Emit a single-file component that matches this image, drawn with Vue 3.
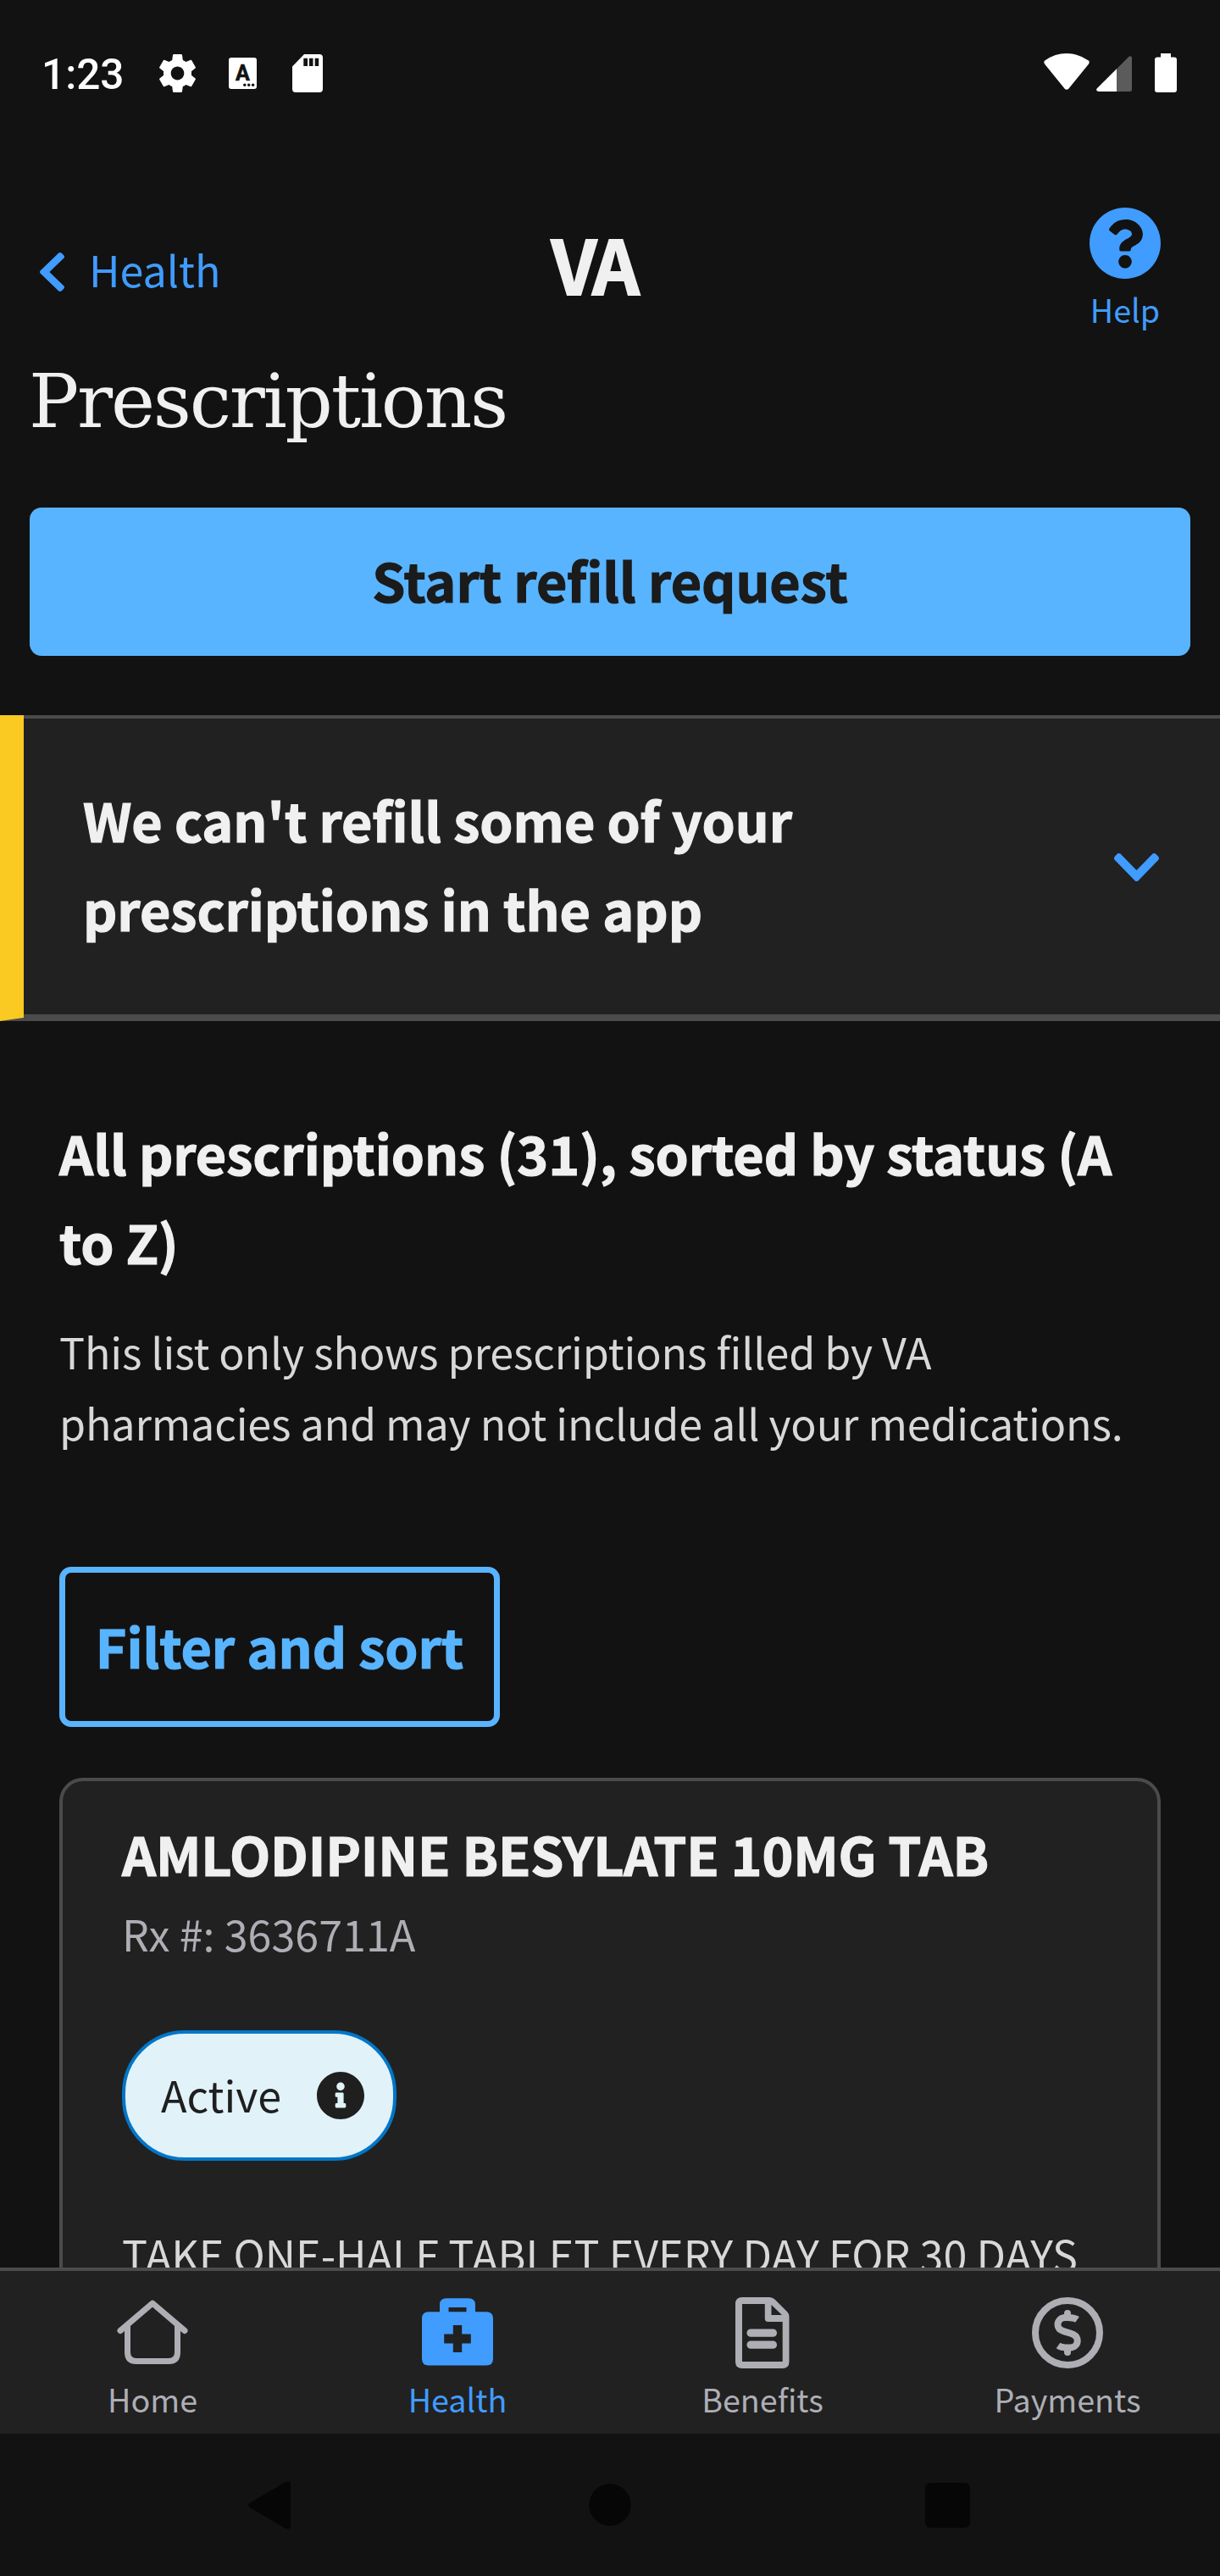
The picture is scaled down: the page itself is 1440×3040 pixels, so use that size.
<script setup>
const tabs = [
  { id: 'home', label: 'Home' },
  { id: 'health', label: 'Health', active: true },
  { id: 'benefits', label: 'Benefits' },
  { id: 'payments', label: 'Payments' },
]
const chevron =
  'M34.52 239.03L228.87 44.69c9.37-9.37 24.57-9.37 33.94 0l22.67 22.67c9.36 9.36 9.37 24.52.04 33.9L131.49 256l154.02 154.75c9.34 9.38 9.32 24.54-.04 33.9l-22.67 22.67c-9.37 9.37-24.57 9.37-33.94 0L34.52 272.97c-9.37-9.37-9.37-24.57 0-33.94z'
</script>

<template>
  <div class="phone">
    <div class="status">
      <span class="clock">1:23</span>
      <svg class="gear" width="43" height="45" viewBox="2.63 2.4 18.74 19.2" preserveAspectRatio="none" fill="#fff">
        <path d="M19.14,12.94c0.04-0.3,0.06-0.61,0.06-0.94c0-0.32-0.02-0.64-0.07-0.94l2.03-1.58c0.18-0.14,0.23-0.41,0.12-0.61 l-1.92-3.32c-0.12-0.22-0.37-0.29-0.59-0.22l-2.39,0.96c-0.5-0.38-1.03-0.7-1.62-0.94L14.4,2.81c-0.04-0.24-0.24-0.41-0.48-0.41 h-3.84c-0.24,0-0.43,0.17-0.47,0.41L9.25,5.35C8.66,5.59,8.12,5.92,7.63,6.29L5.24,5.33c-0.22-0.08-0.47,0-0.59,0.22L2.74,8.87 C2.62,9.08,2.66,9.34,2.86,9.48l2.03,1.58C4.84,11.36,4.8,11.69,4.8,12s0.02,0.64,0.07,0.94l-2.03,1.58 c-0.18,0.14-0.23,0.41-0.12,0.61l1.92,3.32c0.12,0.22,0.37,0.29,0.59,0.22l2.39-0.96c0.5,0.38,1.03,0.7,1.62,0.94l0.36,2.54 c0.05,0.24,0.24,0.41,0.48,0.41h3.84c0.24,0,0.44-0.17,0.47-0.41l0.36-2.54c0.59-0.24,1.13-0.56,1.62-0.94l2.39,0.96 c0.22,0.08,0.47,0,0.59-0.22l1.92-3.32c0.12-0.22,0.07-0.47-0.12-0.61L19.14,12.94z M12,15.4c-1.87,0-3.4-1.53-3.4-3.4 s1.53-3.4,3.4-3.4s3.4,1.53,3.4,3.4S13.87,15.4,12,15.4z" />
      </svg>
      <svg class="lang" width="33" height="37" viewBox="0 0 33 37">
        <rect width="33" height="37" rx="3" fill="#fff" />
        <text x="16.4" y="26.6" text-anchor="middle" font-family="Roboto, sans-serif" font-weight="700" font-size="25" fill="#121212" stroke="#121212" stroke-width=".6">A</text>
        <circle cx="18.8" cy="32.3" r="1.7" fill="#121212" />
        <circle cx="23.7" cy="32.3" r="1.7" fill="#121212" />
        <circle cx="28.6" cy="32.3" r="1.7" fill="#121212" />
      </svg>
      <svg class="sd" width="36" height="45" viewBox="0 0 36 45">
        <path fill="#fff" fill-rule="evenodd" d="M14 0H32Q36 0 36 4V41Q36 45 32 45H4Q0 45 0 41V14.5ZM13.3 4.7V14H18V4.7ZM20 4.7V14H24.5V4.7ZM26.7 4.7V14H31.2V4.7Z" />
      </svg>
      <div class="spacer"></div>
      <svg class="wifi" width="54" height="43" viewBox="0 0 54 43">
        <path fill="#fff" d="M1 12.5Q-.6 10 1.600 8.300Q13 0 27 0T52.400 8.300Q54.600 10 53 12.500L29.500 41.500Q27 44 24.500 41.500Z" />
      </svg>
      <svg class="signal" width="42" height="42" viewBox="0 0 42 42">
        <path fill="#5b5b5b" d="M24 15.300L38.500 .8Q41 -.8 42 2V39.500Q42 42 39.500 42H24Z" />
        <path fill="#fff" d="M24 15.300V42H2.500Q-1 41.400 .6 38.500Z" />
      </svg>
      <svg class="battery" width="26" height="46" viewBox="0 0 26 46">
        <path fill="#fff" d="M7 0H19V4.500H23Q26 4.500 26 7.500V43Q26 46 23 46H3Q0 46 0 43V7.500Q0 4.500 3 4.500H7Z" />
      </svg>
    </div>

    <main class="scroll">
      <header class="header">
        <div class="back">
          <svg width="29" height="46" viewBox="27.500 37.600 265 436.800" preserveAspectRatio="none" fill="#409cff"><path :d="chevron" /></svg>
          <span>Health</span>
        </div>
        <div class="logo">VA</div>
        <div class="help">
          <svg width="84" height="84" viewBox="8 8 496 496" fill="#409cff">
            <path d="M504 256c0 136.997-111.043 248-248 248S8 392.997 8 256C8 119.083 119.043 8 256 8s248 111.083 248 248zM262.655 90c-54.497 0-89.255 22.957-116.549 63.758-3.536 5.286-2.353 12.415 2.715 16.258l34.699 26.31c5.205 3.947 12.621 3.008 16.665-2.122 17.864-22.658 30.113-35.797 57.303-35.797 20.429 0 45.698 13.148 45.698 32.958 0 14.976-12.363 22.667-32.534 33.976C247.128 238.528 216 254.941 216 296v4c0 6.627 5.373 12 12 12h56c6.627 0 12-5.373 12-12v-1.333c0-28.462 83.186-29.647 83.186-106.667 0-58.002-60.165-102-116.531-102zM256 338c-25.365 0-46 20.635-46 46 0 25.364 20.635 46 46 46s46-20.636 46-46c0-25.365-20.635-46-46-46z" />
          </svg>
          <span>Help</span>
        </div>
      </header>

      <h1>Prescriptions</h1>
      <button class="primary">Start refill request</button>

      <section class="alert">
        <h2>We can't refill some of your<br />prescriptions in the app</h2>
        <svg width="53" height="33" viewBox="0 0 436.800 265" preserveAspectRatio="none" fill="#409cff">
          <path transform="translate(-37.600 292.500) rotate(-90)" :d="chevron" />
        </svg>
      </section>

      <section class="list">
        <h2>All prescriptions (31), sorted by status (A<br />to Z)</h2>
        <p class="note">This list only shows prescriptions filled by VA<br />pharmacies and may not include all your medications.</p>
        <button class="filter">Filter and sort</button>
        <article class="card">
          <h3>AMLODIPINE BESYLATE 10MG TAB</h3>
          <p class="rx">Rx #: 3636711A</p>
          <div class="pill">
            <span>Active</span>
            <svg width="56" height="56" viewBox="8 8 496 496" fill="#1f1f1f">
              <path d="M256 8C119.043 8 8 119.083 8 256c0 136.997 111.043 248 248 248s248-111.003 248-248C504 119.083 392.957 8 256 8zm0 110c23.196 0 42 18.804 42 42s-18.804 42-42 42-42-18.804-42-42 18.804-42 42-42zm56 254c0 6.627-5.373 12-12 12h-88c-6.627 0-12-5.373-12-12v-24c0-6.627 5.373-12 12-12h12v-64h-12c-6.627 0-12-5.373-12-12v-24c0-6.627 5.373-12 12-12h64c6.627 0 12 5.373 12 12v100h12c6.627 0 12 5.373 12 12v24z" />
            </svg>
          </div>
          <p class="directions">TAKE ONE-HALF TABLET EVERY DAY FOR 30 DAYS</p>
        </article>
      </section>
    </main>

    <nav class="tabs">
      <div v-for="t in tabs" :key="t.id" class="tab" :class="{ active: t.active }">
        <svg width="84" height="84" viewBox="0 0 84 84">
          <g v-if="t.id === 'home'" fill="none" stroke="currentColor" stroke-width="7" stroke-linecap="round" stroke-linejoin="round">
            <path d="M4 39.500L42 7.200L80 39.500" />
            <path stroke-linecap="butt" d="M12.500 34V65Q12.500 75.500 23 75.500H61Q71.500 75.500 71.500 65V34" />
          </g>
          <path v-else-if="t.id === 'health'" fill="currentColor" fill-rule="evenodd" d="M8 17.300H21V9Q21 1.300 29 1.300H55Q63 1.300 63 9V17.300H76Q84 17.300 84 25.300V72.500Q84 80.500 76 80.500H8Q0 80.500 0 72.500V25.300Q0 17.300 8 17.300ZM31.500 12V17.300H52.500V12ZM36.800 33V43.500H26.200V54.500H36.800V65H47.200V54.500H57.800V43.500H47.200V33Z" />
          <g v-else-if="t.id === 'benefits'" fill="currentColor">
            <path fill-rule="evenodd" d="M18 0H50Q54 0 57 3L71 17Q73.500 19.500 73.500 23V76Q73.500 84 65.500 84H18Q10 84 10 76V8Q10 0 18 0ZM18 8V76H65.700V29H48.500Q44.800 29 44.800 25.300V8ZM52.500 9V21H65Z" />
            <rect x="23.500" y="37.500" width="35.500" height="9.300" rx="4.650" />
            <rect x="23.500" y="51.500" width="35.500" height="9.300" rx="4.650" />
          </g>
          <g v-else fill="none" stroke="currentColor" stroke-width="8">
            <circle cx="42" cy="42" r="38" />
            <path d="M53.500 26.500Q50 24 42 24H39.500C34 24 30.500 28 30.500 32.500C30.500 37 33.500 39 38 40.300L46 42.800C50.500 44.200 53.700 47 53.700 51.500C53.700 56 50 59.500 45 59.500H42Q34.500 59.500 31 57" />
            <path stroke-linecap="round" d="M42 19V24M42 60V65" />
          </g>
        </svg>
        <span>{{ t.label }}</span>
      </div>
    </nav>

    <div class="sysnav">
      <svg width="50" height="57" viewBox="0 0 50 57"><path fill="#060606" d="M1.500 26L43.500 1.500Q50 -1.500 50 4V53Q50 58.500 43.500 55.500L1.500 31Q-1.500 28.500 1.500 26Z" /></svg>
      <svg width="50" height="50" viewBox="0 0 50 50"><circle cx="25" cy="25" r="24.700" fill="#060606" /></svg>
      <svg width="53" height="53" viewBox="0 0 53 53"><rect width="53" height="53" rx="6" fill="#060606" /></svg>
    </div>
  </div>
</template>

<style>
body {
  background: #121212;
}
</style>

<style scoped>
.phone {
  width: 1440px;
  height: 3040px;
  display: flex;
  flex-direction: column;
  overflow: hidden;
  background: #121212;
  color: #f0f0f0;
  font-family: 'Noto Sans CJK JP', 'Noto Sans', sans-serif;
  white-space: nowrap;
}
svg { display: block; flex: none; }
h1, h2, h3, p { margin: 0; }
button {
  display: block;
  font-family: inherit;
  white-space: nowrap;
}
.status {
  flex: none;
  height: 172px;
  display: flex;
  align-items: flex-start;
  padding: 0 51px 0 49px;
}
.clock {
  width: 99px;
  margin-top: 59px;
  font: 500 49.500px/59px Roboto, sans-serif;
  color: #fff;
}
.gear { margin: 64px 0 0 40px; }
.lang { margin: 68px 0 0 39px; }
.sd { margin: 64px 0 0 42px; }
.spacer { flex: 1; }
.wifi { margin: 63px 8px 0 0; }
.signal { margin: 66px 27px 0 0; }
.battery { margin-top: 63px; }

.scroll {
  flex: 1;
  min-height: 0;
  overflow: hidden;
}
.header {
  height: 240px;
  display: grid;
  grid-template-columns: 1fr auto 1fr;
  align-items: start;
}
.back {
  display: flex;
  align-items: center;
  gap: 29px;
  padding-left: 47px;
  margin-top: 103px;
  height: 84px;
  font-size: 50.200px;
  line-height: 84px;
  color: #409cff;
}
.back svg { margin-top: 8px; }
.logo {
  margin: 88px 34px 0 0;
  width: 105px;
  font-size: 87.300px;
  line-height: 100px;
  font-weight: 700;
  letter-spacing: -4px;
  -webkit-text-stroke: 1.800px currentColor;
}
.help {
  justify-self: end;
  margin: 73px 70px 0 0;
  width: 84px;
  display: flex;
  flex-direction: column;
  align-items: center;
  color: #409cff;
  font-size: 37.700px;
  line-height: 40px;
}
.help span { margin-top: 15.600px; }
h1 {
  margin: 12px 0 0 34px;
  font-family: 'DejaVu Serif', serif;
  font-weight: 400;
  font-size: 88px;
  line-height: 100px;
  letter-spacing: -2.200px;
}
.primary {
  width: 1370px;
  height: 175px;
  margin: 75px 35px 0;
  padding: 0 0 6px;
  border: 0;
  border-radius: 14px;
  background: #58b4ff;
  color: #1b1b1b;
  font-size: 62.700px;
  font-weight: 700;
  -webkit-text-stroke: 1.200px currentColor;
}
h2, h3 {
  font-size: 62.700px;
  line-height: 105px;
  font-weight: 700;
  -webkit-text-stroke: 1.200px currentColor;
}
h3 { letter-spacing: -0.180px; }
.alert {
  box-sizing: border-box;
  height: 361px;
  margin-top: 70px;
  padding: 4px 72px 4px 70px;
  border-left: 28px solid #fac922;
  border-bottom: 4px solid #4b4b4b;
  box-shadow: inset 0 4px 0 #4b4b4b, inset 0 -4px 0 #4b4b4b;
  background: #212121;
  display: flex;
  justify-content: space-between;
  align-items: center;
}
.alert h2 { padding-bottom: 7px; }
.alert svg { margin-top: 2px; }
.list { padding: 101.500px 70px 0; }
.note {
  margin-top: 35.500px;
  font-size: 50.200px;
  line-height: 84px;
  letter-spacing: -0.140px;
  color: #d8d8d8;
}
.filter {
  box-sizing: border-box;
  width: 520px;
  height: 189px;
  margin-top: 129px;
  padding: 0 0 5px;
  border: 7px solid #58b4ff;
  border-radius: 14px;
  background: transparent;
  color: #58b4ff;
  font-size: 62.700px;
  font-weight: 700;
  -webkit-text-stroke: 1.200px currentColor;
}
.card {
  height: 800px;
  margin-top: 60px;
  padding: 32px 70px 0;
  border: 4px solid #4b4b4b;
  border-radius: 28px;
  background: #212121;
}
.rx {
  font-size: 50.200px;
  line-height: 84px;
  color: #aeaeb5;
}
.pill {
  box-sizing: border-box;
  width: 324px;
  height: 154px;
  margin-top: 73px;
  padding: 0 34px 0 42px;
  border: 4px solid #0076c8;
  border-radius: 74px;
  background: #e1f2f9;
  color: #1f1f1f;
  display: flex;
  align-items: center;
  justify-content: space-between;
  font-size: 50.200px;
}
.pill span { line-height: 84px; margin-top: -5px; }
.directions {
  margin-top: 67px;
  font-size: 50.200px;
  line-height: 84px;
  color: #d8d8d8;
}
.tabs {
  box-sizing: border-box;
  flex: none;
  height: 196px;
  border-top: 4px solid #4b4b4b;
  background: #212121;
  display: grid;
  grid-template-columns: repeat(4, 1fr);
}
.tab {
  display: flex;
  flex-direction: column;
  align-items: center;
  padding-top: 31px;
  color: #aeaeb5;
  font-size: 37.700px;
  line-height: 50px;
}
.tab span { margin-top: 10.500px; }
.tab.active { color: #409cff; }
.sysnav {
  flex: none;
  height: 168px;
  box-sizing: border-box;
  display: flex;
  justify-content: space-between;
  align-items: center;
  padding: 0 295px 0 293px;
}
.sysnav svg:nth-child(2) { margin-left: 4px; }
</style>
